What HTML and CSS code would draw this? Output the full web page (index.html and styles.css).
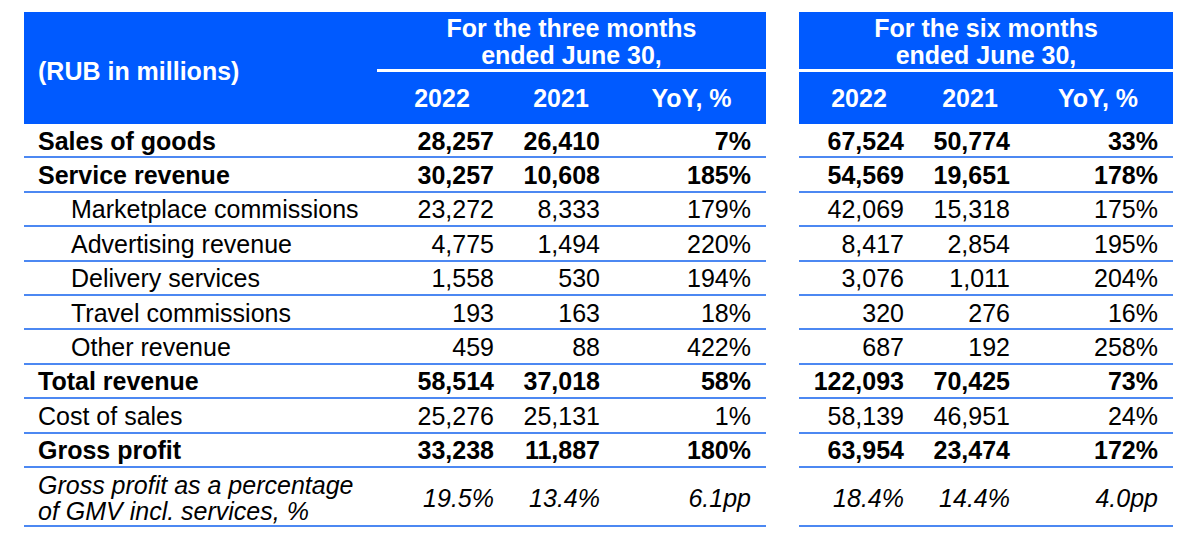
FILE: index.html
```html
<!DOCTYPE html>
<html lang="en">
<head>
<meta charset="utf-8">
<title>Revenue</title>
<link rel="stylesheet" href="styles.css">
</head>
<body>
<div class="sheet">
  <div class="grid">
    <div class="h-label">(RUB in millions)</div>
    <div class="h-group g1">For the three months<br>ended June 30,</div>
    <div class="h-gap"></div>
    <div class="h-group g2">For the six months<br>ended June 30,</div>
    <div class="h-year">2022</div>
    <div class="h-year">2021</div>
    <div class="h-year yoy">YoY, %</div>
    <div class="h-gap"></div>
    <div class="h-year y4">2022</div>
    <div class="h-year y5">2021</div>
    <div class="h-year yoy">YoY, %</div>

    <div class="c lab b">Sales of goods</div><div class="c n1 b">28,257</div><div class="c n2 b">26,410</div><div class="c n3 b">7%</div><div class="gap"></div><div class="c n4 b">67,524</div><div class="c n5 b">50,774</div><div class="c n6 b">33%</div>

    <div class="c lab b">Service revenue</div><div class="c n1 b">30,257</div><div class="c n2 b">10,608</div><div class="c n3 b">185%</div><div class="gap"></div><div class="c n4 b">54,569</div><div class="c n5 b">19,651</div><div class="c n6 b">178%</div>

    <div class="c lab sub">Marketplace commissions</div><div class="c n1">23,272</div><div class="c n2">8,333</div><div class="c n3">179%</div><div class="gap"></div><div class="c n4">42,069</div><div class="c n5">15,318</div><div class="c n6">175%</div>

    <div class="c lab sub">Advertising revenue</div><div class="c n1">4,775</div><div class="c n2">1,494</div><div class="c n3">220%</div><div class="gap"></div><div class="c n4">8,417</div><div class="c n5">2,854</div><div class="c n6">195%</div>

    <div class="c lab sub">Delivery services</div><div class="c n1">1,558</div><div class="c n2">530</div><div class="c n3">194%</div><div class="gap"></div><div class="c n4">3,076</div><div class="c n5">1,011</div><div class="c n6">204%</div>

    <div class="c lab sub">Travel commissions</div><div class="c n1">193</div><div class="c n2">163</div><div class="c n3">18%</div><div class="gap"></div><div class="c n4">320</div><div class="c n5">276</div><div class="c n6">16%</div>

    <div class="c lab sub">Other revenue</div><div class="c n1">459</div><div class="c n2">88</div><div class="c n3">422%</div><div class="gap"></div><div class="c n4">687</div><div class="c n5">192</div><div class="c n6">258%</div>

    <div class="c lab b">Total revenue</div><div class="c n1 b">58,514</div><div class="c n2 b">37,018</div><div class="c n3 b">58%</div><div class="gap"></div><div class="c n4 b">122,093</div><div class="c n5 b">70,425</div><div class="c n6 b">73%</div>

    <div class="c lab">Cost of sales</div><div class="c n1">25,276</div><div class="c n2">25,131</div><div class="c n3">1%</div><div class="gap"></div><div class="c n4">58,139</div><div class="c n5">46,951</div><div class="c n6">24%</div>

    <div class="c lab b">Gross profit</div><div class="c n1 b">33,238</div><div class="c n2 b">11,887</div><div class="c n3 b">180%</div><div class="gap"></div><div class="c n4 b">63,954</div><div class="c n5 b">23,474</div><div class="c n6 b">172%</div>

    <div class="c lab i tall">Gross profit as a percentage<br>of GMV incl. services, %</div><div class="c n1 i tall">19.5%</div><div class="c n2 i tall">13.4%</div><div class="c n3 i tall">6.1pp</div><div class="gap"></div><div class="c n4 i tall">18.4%</div><div class="c n5 i tall">14.4%</div><div class="c n6 i tall">4.0pp</div>
  </div>
</div>
</body>
</html>
```
FILE: styles.css
```css
html, body {
  margin: 0;
  padding: 0;
  background: #ffffff;
}

body {
  font-family: "Liberation Sans", Arial, sans-serif;
  font-size: 25px;
  color: #000;
}

.sheet {
  padding: 12px 0 0 24px;
}

.grid {
  display: grid;
  grid-template-columns: 353px 130px 108px 151px 33px 120px 102px 152px;
  grid-template-rows: 60px 52px repeat(10, 34.4px) 59px;
}

.h-label {
  grid-row: 1 / span 2;
  grid-column: 1;
  background: #005aff;
  color: #fff;
  font-weight: bold;
  display: flex;
  align-items: center;
  padding: 6px 0 0 14px;
}

.h-group {
  background: #005aff;
  color: #fff;
  font-weight: bold;
  text-align: center;
  line-height: 27px;
  display: flex;
  align-items: center;
  justify-content: center;
  padding-top: 2px;
  border-bottom: 3px solid #fff;
}

.g1 { grid-column: 2 / span 3; grid-row: 1; }
.g2 { grid-column: 6 / span 3; grid-row: 1; }

.h-gap {
  background: #fff;
}

.h-year {
  background: #005aff;
  color: #fff;
  font-weight: bold;
  display: flex;
  align-items: center;
  justify-content: center;
  padding-top: 1px;
}

.h-year.yoy { padding-left: 2px; }

.c {
  display: flex;
  align-items: center;
  border-bottom: 2px solid #4c88f2;
  line-height: 25px;
  white-space: nowrap;
  padding-top: 2px;
}

.lab { padding-left: 14px; }
.lab.sub { padding-left: 47px; }

.n1, .n2, .n3, .n4, .n5, .n6 { justify-content: flex-end; }
.n1 { padding-right: 13px; }
.n2 { padding-right: 15px; }
.n3 { padding-right: 15px; }
.n4 { padding-right: 15px; }
.n5 { padding-right: 11px; }
.n6 { padding-right: 15px; }

.b { font-weight: bold; }
.i { font-style: italic; }
.tall { padding-top: 4px; line-height: 26px; }
```
